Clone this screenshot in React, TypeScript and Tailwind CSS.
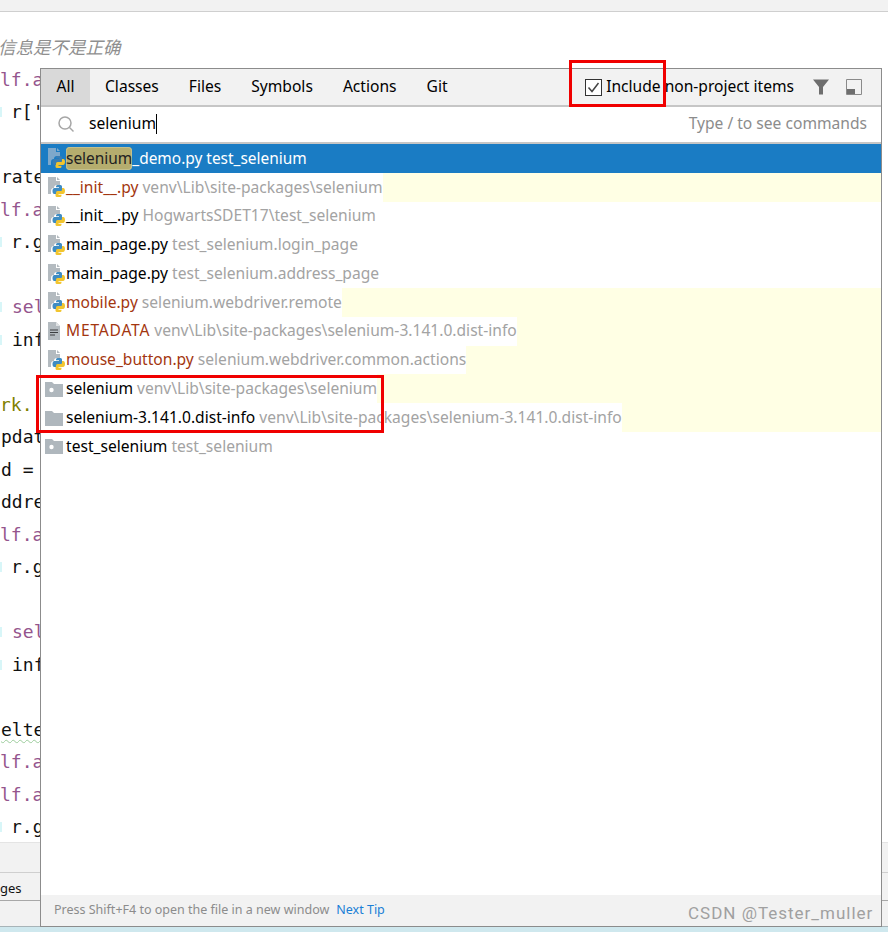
import React from "react";

const uiFont = "font-['Noto_Sans','Noto_Sans_CJK_SC',sans-serif]";

function PyIcon({ dim = false }: { dim?: boolean }) {
  const snake =
    "M9.5 8h3a1.500 1.500 0 0 1 1.500 1.500V13a1 1 0 0 1-1 1H9.500A1.500 1.500 0 0 0 8 15.500V17H6.200c-1 0-1.700-1-1.700-3s.9-3 1.900-3H11v-.7H8V9.500A1.500 1.500 0 0 1 9.500 8z";
  return (
    <svg width="18" height="20" viewBox="0 0 18 20" className="shrink-0">
      <path d="M0 0h8v4h4v4H9a3 3 0 0 0-3 3H5a3 3 0 0 0-2 3v3H0z" fill={dim ? "#7ea8cb" : "#b4bbc0"} />
      <path d="M9 0l3 3H9z" fill={dim ? "#7ea8cb" : "#b4bbc0"} />
      <path d={snake} fill="#f2c52e" transform="rotate(180 10.750 14)" />
      <path d={snake} fill={dim ? "#3a7db3" : "#3f8cc2"} />
    </svg>
  );
}

function TextIcon() {
  return (
    <svg width="18" height="18" viewBox="0 0 18 18" className="shrink-0">
      <path d="M0 0h8l4 4v14H0z" fill="#b4bbc0" />
      <path d="M8 0l4 4H8z" fill="#dfe2e4" />
      <path d="M2 8h8M2 10.500h8M2 13h5" stroke="#3c3f41" strokeWidth="1.200" />
    </svg>
  );
}

function FolderIcon({ dot = false }: { dot?: boolean }) {
  return (
    <svg width="18" height="16" viewBox="0 0 18 16" className="ml-[-3px] shrink-0">
      <path d="M0 1h7l2 2h9v13H0z" fill="#afb7bd" />
      {dot && <circle cx="6.500" cy="9" r="2.200" fill="#fff" />}
    </svg>
  );
}

type Row = {
  icon: React.ReactNode;
  name: string;
  hint: string;
  tone: "plain" | "foreign";
  yellow?: boolean;
  caps?: boolean;
};

const rows: Row[] = [
  { icon: <PyIcon />, name: "__init__.py", hint: "venv\\Lib\\site-packages\\selenium", tone: "foreign", yellow: true },
  { icon: <PyIcon />, name: "__init__.py", hint: "HogwartsSDET17\\test_selenium", tone: "plain" },
  { icon: <PyIcon />, name: "main_page.py", hint: "test_selenium.login_page", tone: "plain" },
  { icon: <PyIcon />, name: "main_page.py", hint: "test_selenium.address_page", tone: "plain" },
  { icon: <PyIcon />, name: "mobile.py", hint: "selenium.webdriver.remote", tone: "foreign", yellow: true },
  { icon: <TextIcon />, name: "METADATA", hint: "venv\\Lib\\site-packages\\selenium-3.141.0.dist-info", tone: "foreign", yellow: true, caps: true },
  { icon: <PyIcon />, name: "mouse_button.py", hint: "selenium.webdriver.common.actions", tone: "foreign", yellow: true },
  { icon: <FolderIcon dot />, name: "selenium", hint: "venv\\Lib\\site-packages\\selenium", tone: "plain", yellow: true },
  { icon: <FolderIcon />, name: "selenium-3.141.0.dist-info", hint: "venv\\Lib\\site-packages\\selenium-3.141.0.dist-info", tone: "plain", yellow: true },
  { icon: <FolderIcon dot />, name: "test_selenium", hint: "test_selenium", tone: "plain" },
];

type Code = { t: string; c?: string; x?: number; guide?: boolean; wavy?: boolean };

const code: Code[] = [
  { t: "" },
  { t: "lf.a", c: "self", x: 0 },
  { t: "r['", x: 11, guide: true },
  { t: "" },
  { t: "rate", x: 1 },
  { t: "lf.a", c: "self", x: 0 },
  { t: "r.g", x: 11, guide: true },
  { t: "" },
  { t: "sel", c: "self", x: 12, guide: true },
  { t: "inf", x: 12, guide: true },
  { t: "" },
  { t: "rk.", c: "mark", x: 0 },
  { t: "pdat", x: 1 },
  { t: "d =", x: 1 },
  { t: "ddre", x: 1 },
  { t: "lf.a", c: "self", x: 0 },
  { t: "r.g", x: 11, guide: true },
  { t: "" },
  { t: "sel", c: "self", x: 12, guide: true },
  { t: "inf", x: 12, guide: true },
  { t: "" },
  { t: "elte", x: 1, wavy: true },
  { t: "lf.a", c: "self", x: 0 },
  { t: "lf.a", c: "self", x: 0 },
  { t: "r.g", x: 11, guide: true },
];

function CodeLine({ line }: { line: Code }) {
  const color =
    line.c === "self" ? "text-[#94558d]" : line.c === "mark" ? "text-[#808000]" : "text-[#111111]";
  return (
    <div className="relative h-[32.5px] leading-[32.5px] whitespace-pre">
      {line.guide && <span className="absolute left-0 top-[11px] h-[10px] w-[2px] bg-[#d8f6f8]" />}
      {line.t && (
        <span
          className={`${color} ${line.wavy ? "underline decoration-wavy decoration-[#9ccc9c] decoration-1 underline-offset-[3px]" : ""}`}
          style={{ marginLeft: line.x }}
        >
          {line.t}
        </span>
      )}
    </div>
  );
}

export default function App() {
  return (
    <div className={`relative flex h-[932px] w-[888px] flex-col overflow-hidden bg-white ${uiFont}`}>
      <div className="h-[12px] shrink-0 border-b border-[#cfcfcf] bg-[#f2f2f2]" />

      <div className="relative flex-1 overflow-hidden bg-white pt-[19px] font-['DejaVu_Sans_Mono',monospace] text-[18px]">
        <div className="absolute left-[-2px] top-[22px] font-['Noto_Sans_CJK_SC',sans-serif] text-[17.5px] italic leading-[26px] text-[#8f8f8f]">
          信息是不是正确
        </div>
        {code.map((l, i) => (
          <CodeLine key={i} line={l} />
        ))}
      </div>

      <div className="h-[30px] shrink-0 border-t border-[#e4e4e4] bg-[#f2f2f2]" />
      <div className="flex h-[28px] shrink-0 items-center border-t border-[#cfcfcf] bg-[#f2f2f2] pt-[5px] text-[13px] text-[#111]">
        <span>ges</span>
      </div>
      <div className="h-[26px] shrink-0 border-t border-[#a8a8a8] bg-[#f2f2f2]" />
      <div className="h-[6px] shrink-0 border-t border-[#a8b4b8] bg-[#cfe8ee]" />

      <div className="absolute left-[40px] top-[68px] flex h-[859px] w-[842px] flex-col border border-[#8c8c8c] bg-white text-[15.6px] text-black">
        <div className="flex h-[38px] shrink-0 items-stretch border-b-2 border-[#c6c6c6] bg-[#f2f2f2]">
          <div className="flex w-[49px] items-center justify-center bg-[#d9d9d9]">All</div>
          {["Classes", "Files", "Symbols", "Actions", "Git"].map((t) => (
            <div key={t} className="flex items-center px-[15px]">
              {t}
            </div>
          ))}
          <div className="ml-auto flex items-center">
            <span className="flex h-[17px] w-[17px] items-center justify-center border border-[#333] bg-white">
              <svg width="13" height="13" viewBox="0 0 13 13">
                <path d="M1.500 6.500l3.500 4L11.500 2" fill="none" stroke="#444" strokeWidth="1.500" />
              </svg>
            </span>
            <span className="ml-[4px]">Include non-project items</span>
            <svg width="16" height="16" viewBox="0 0 16 16" className="ml-[19px]">
              <path d="M0 .5h16L10 8v7.500H6V8z" fill="#6e6e6e" />
            </svg>
            <svg width="16" height="16" viewBox="0 0 16 16" className="ml-[17px] mr-[19px]">
              <path d="M.500.500h15v15H.500z" fill="none" stroke="#8a8a8a" />
              <rect x="1" y="10" width="8" height="5" fill="#6e6e6e" />
            </svg>
          </div>
        </div>

        <div className="flex h-[37px] shrink-0 items-center border-b-2 border-[#c6c6c6] bg-white pb-[2px] pl-[16px] pr-[14px]">
          <svg width="18" height="18" viewBox="0 0 18 18" className="shrink-0">
            <circle cx="8" cy="8" r="6" fill="none" stroke="#a6a6a6" strokeWidth="1.500" />
            <path d="M12.500 12.500l4 4" stroke="#a6a6a6" strokeWidth="1.500" />
          </svg>
          <span className="ml-[14px]">selenium</span>
          <span className="h-[20px] w-px bg-black" />
          <span className="ml-auto text-[#8c8c8c]">Type / to see commands</span>
        </div>

        <div className="flex-1 overflow-hidden">
          <div className="flex h-[28.8px] items-center bg-[#1a7cc4] pl-[7px] text-[15.45px] text-white">
            <span className="flex w-[18px] items-center">
              <PyIcon dim />
            </span>
            <span className="rounded-[4px] bg-[#b5ad6e] text-[#222] ring-1 ring-inset ring-[#c4c08c]">selenium</span>
            <span>_demo.py test_selenium</span>
          </div>
          {rows.map((r, i) => (
            <div key={i} className={`flex h-[28.8px] items-center ${r.yellow ? "bg-[#ffffe4]" : "bg-white"}`}>
              <div className="flex h-full items-center whitespace-pre bg-white pl-[7px]">
                <span className="flex w-[18px] items-center">{r.icon}</span>
                <span
                  className={`${r.tone === "foreign" ? "text-[#a3360f]" : "text-black"} ${r.caps ? "tracking-[0.8px]" : ""}`}
                >
                  {r.name}
                </span>
                <span className="ml-[4px] text-[#a3a3a3]">{r.hint}</span>
              </div>
            </div>
          ))}
        </div>

        <div className="flex h-[31px] shrink-0 items-center bg-[#f2f2f2] pl-[13px] text-[12.5px] text-[#8c8c8c]">
          <span>Press Shift+F4 to open the file in a new window</span>
          <span className="ml-[7px] text-[#1a7fd6]">Next Tip</span>
        </div>
      </div>

      <div className="pointer-events-none absolute left-[569px] top-[60px] h-[47px] w-[97px] border-[3px] border-[#f00000]" />
      <div className="pointer-events-none absolute left-[36px] top-[375px] h-[58px] w-[348px] border-[3px] border-[#f00000]" />
      <div className="pointer-events-none absolute left-[688px] top-[901px] font-['Roboto',sans-serif] text-[17px] tracking-[1px] text-[#a0a0a0]">
        CSDN @Tester_muller
      </div>
    </div>
  );
}
